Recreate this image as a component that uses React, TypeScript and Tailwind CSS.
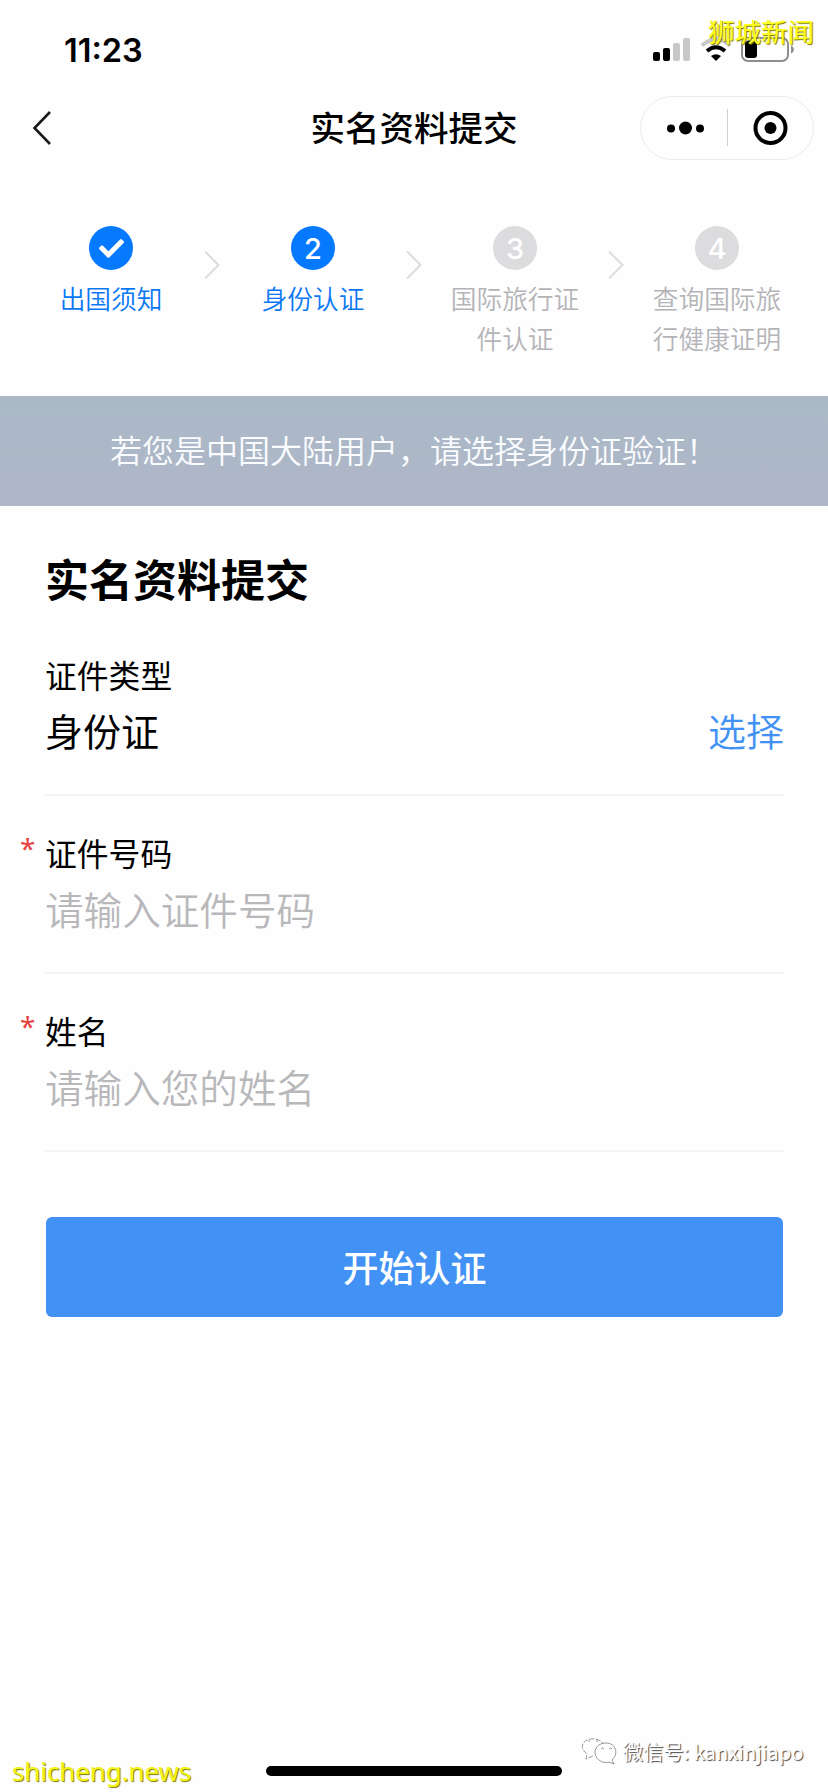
import { FaCheck } from 'react-icons/fa';

const steps = [
  { label: '出国须知', active: true, done: true },
  { label: '身份认证', active: true },
  { label: '国际旅行证件认证' },
  { label: '查询国际旅行健康证明' },
];

const fields = [
  { label: '证件类型', value: '身份证', action: '选择' },
  { label: '证件号码', placeholder: '请输入证件号码', required: true },
  { label: '姓名', placeholder: '请输入您的姓名', required: true },
];

function StatusBar() {
  return (
    <div className="flex h-[84px] items-start justify-between pl-[64px] pr-[32px] pt-[30px]">
      <span className="font-[Inter] text-[32.500px] font-semibold leading-[41px]">11:23</span>
      <svg width="143" height="26" viewBox="0 0 143 26" className="mt-[6px]">
        <rect x="0" y="16" width="7" height="9" rx="2" />
        <rect x="10" y="12" width="7" height="13" rx="2" />
        <rect x="20" y="7" width="7" height="18" rx="2" fill="#c8c8c8" />
        <rect x="30" y="2" width="7" height="23" rx="2" fill="#c8c8c8" />
        <g fill="none" strokeWidth="4">
          <path d="M49 9.500Q63 -3 77 9.500" stroke="#c8c8c8" />
          <path d="M54 15Q63 7.500 72 15" stroke="#000" />
        </g>
        <path d="M58 20Q63 16.500 68 20L63 25Z" />
        <rect x="89" y="2" width="46" height="23" rx="6" fill="none" stroke="#8e8e8e" strokeWidth="2" />
        <rect x="92" y="5" width="12" height="17" rx="3" />
        <path d="M138 9.500Q141 11 141 13.500T138 17.500Z" fill="#8e8e8e" />
      </svg>
    </div>
  );
}

function NavBar() {
  return (
    <div className="flex h-[88px] items-center justify-between pl-[32px] pr-[14px]">
      <div className="flex w-[170px]">
        <svg width="20" height="36" viewBox="0 0 20 36" fill="none" stroke="#1a1a1a" strokeWidth="2.6">
          <path d="M18 2L2.500 18L18 34" />
        </svg>
      </div>
      <h1 className="pb-[3px] text-[34.500px] font-medium">实名资料提交</h1>
      <div className="flex w-[188px] justify-end">
        <div className="flex h-[64px] w-[174px] items-center rounded-full border border-[#ececec]">
          <svg width="172" height="62" viewBox="0 0 172 62">
            <circle cx="30" cy="31.500" r="4" />
            <circle cx="44.500" cy="31" r="6.500" />
            <circle cx="59" cy="31.500" r="4" />
            <path d="M86.500 12V49" stroke="#cfcfcf" />
            <circle cx="129.500" cy="31" r="15" fill="none" stroke="#000" strokeWidth="4" />
            <circle cx="129.500" cy="31" r="6" />
          </svg>
        </div>
      </div>
    </div>
  );
}

function Steps() {
  return (
    <div className="flex h-[224px] items-start px-[45px] pt-[54px]">
      {steps.map((step, i) => (
        <div key={step.label} className="contents">
          {i > 0 && (
            <svg width="16" height="30" viewBox="0 0 16 30" fill="none" stroke="#dcdce0" strokeWidth="2" className="mx-[27px] mt-[24px] shrink-0">
              <path d="M1 1.500L14.500 15L1 28.500" />
            </svg>
          )}
          <div className={`flex w-[132px] shrink-0 flex-col items-center ${step.active ? 'text-[#0a78f5]' : 'text-[#b4b4b8]'}`}>
            <div className={`flex size-[44px] items-center justify-center rounded-full text-white ${step.active ? 'bg-[#057aff]' : 'bg-[#dcdbde]'}`}>
              {step.done ? (
                <FaCheck size={25} />
              ) : (
                <span className="font-[Inter] text-[29px] font-medium leading-none">{i + 1}</span>
              )}
            </div>
            <p className="mt-[8px] text-center text-[25.700px] leading-[40px] [font-weight:350]">{step.label}</p>
          </div>
        </div>
      ))}
    </div>
  );
}

function WechatIcon() {
  return (
    <svg width="36" height="28" viewBox="0 0 36 28" fill="none" stroke="#8a8a8a" strokeWidth="0.9">
      <path d="M12 18L5 21L6 16C-2 10 1 2 10 1C16 0 21 3 22 6" strokeDasharray="5 1.500" />
      <path d="M31 22C38 16 35 5 25 5C16 5 11 13 16 20C20 25 25 25 28 24L33 26Z" />
      <path d="M20 11q1.500-2 3 0M28 11q1.500-2 3 0M7 3h2M15 3h2" />
    </svg>
  );
}

export default function App() {
  return (
    <div className="relative flex h-[1792px] w-[828px] flex-col overflow-hidden bg-[#fefefe] font-['Noto_Sans_CJK_SC',sans-serif] text-black">
      <StatusBar />
      <NavBar />
      <Steps />

      <div className="flex h-[110px] items-center justify-center bg-gradient-to-b from-[#abb9c7] to-[#aeb6c7] pb-[4px] text-[32px] text-[#fafcff] [font-weight:350]">
        若您是中国大陆用户，请选择身份证验证！
      </div>

      <main className="pl-[45px] pr-[44px] pt-[42px]">
        <h2 className="text-[44px] font-bold leading-[60px]">实名资料提交</h2>

        <div className="pt-[10px]">
          {fields.map((field) => (
            <div key={field.label} className="relative h-[178px] border-b-2 border-[#f5f5f5] pt-[34px]">
              {field.required && (
                <span className="absolute left-[-25px] top-[34px] font-['Noto_Sans'] text-[28px] leading-[36px] text-[#e64340]">*</span>
              )}
              <div className="text-[31.800px] leading-[44px]">{field.label}</div>
              <div className="mt-[7px] flex justify-between text-[38px] leading-[54px]">
                {field.value && <span>{field.value}</span>}
                {field.placeholder && <span className="text-[38.600px] text-[#b8b8bb] [font-weight:350]">{field.placeholder}</span>}
                {field.action && <span className="text-[#4192f4] [font-weight:350]">{field.action}</span>}
              </div>
            </div>
          ))}
        </div>

        <button className="ml-px mt-[65px] h-[100px] w-[737px] rounded-[6px] bg-[#4192f4] pb-[3px] text-[36px] font-medium text-white">
          开始认证
        </button>
      </main>

      {/* Home indicator */}
      <div className="mx-auto mb-[16px] mt-auto h-[10px] w-[296px] rounded-full bg-black" />

      {/* Watermarks */}
      <div className="absolute left-[708px] top-[11px] whitespace-nowrap text-[26.500px] leading-[40px] text-[#ffff1a] [text-shadow:1px_1px_1px_#777700]">
        狮城新闻
      </div>
      <div className="absolute left-[12px] top-[1751px] font-['Noto_Sans'] text-[25.800px] leading-[40px] text-[#f4f414] [text-shadow:1px_1px_1px_#777700]">
        shicheng.news
      </div>
      <div className="absolute left-[581px] top-[1732px] flex items-center gap-[6px] whitespace-nowrap text-[20.200px] leading-[40px] text-white [text-shadow:1px_1px_1px_#444]">
        <WechatIcon />
        微信号: kanxinjiapo
      </div>
    </div>
  );
}
